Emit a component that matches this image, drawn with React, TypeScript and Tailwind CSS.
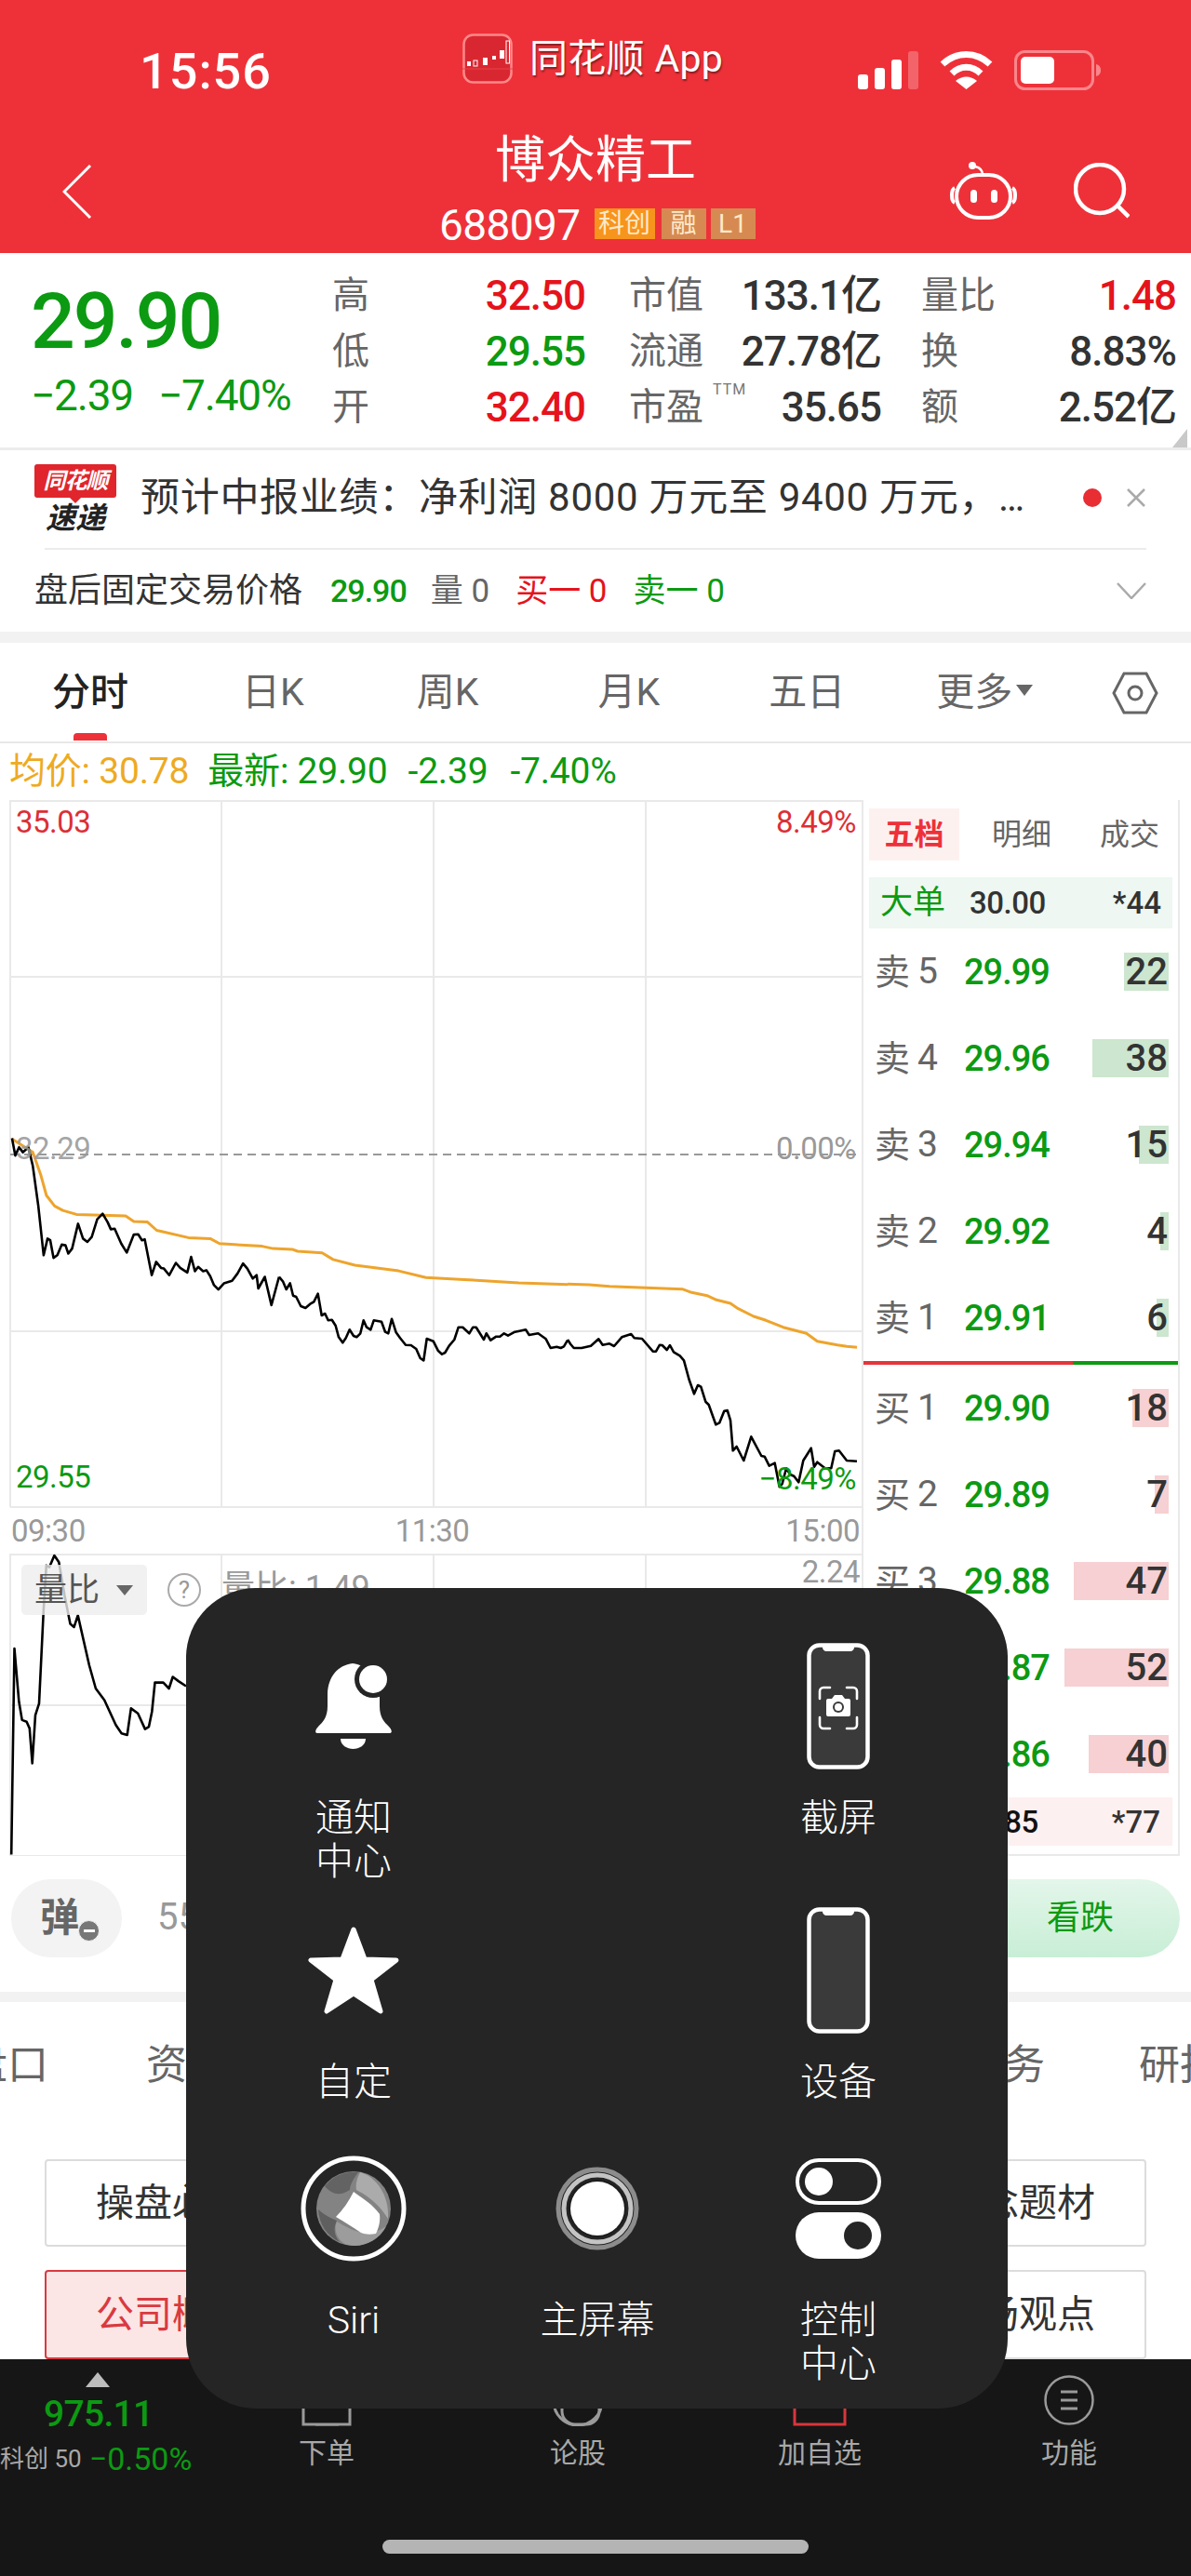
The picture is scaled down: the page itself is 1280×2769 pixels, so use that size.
import React from "react";

const GREEN = "text-[#0c9a12]";

const map = (a: number[], sx: number, ox: number, sy: number, oy: number) => {
  const out: string[] = [];
  for (let i = 0; i < a.length; i += 2) out.push(`${(a[i] / sx + ox).toFixed(1)},${(a[i + 1] / sy + oy).toFixed(1)}`);
  return out.join(" ");
};

const black1 = map([22,1018,28,1070,35,1045,42,1060,52,1045,60,1100,70,1220,80,1370,87,1320,92,1325,98,1378,105,1370,113,1338,120,1340,125,1365,132,1350,143,1275,152,1320,160,1330,168,1315,178,1262,188,1245,197,1270,203,1292,210,1290,222,1335,232,1362,245,1308,253,1307,260,1325,265,1322,278,1430,286,1390,295,1408,300,1410,310,1430,322,1393,330,1408,343,1422,350,1375,357,1418,363,1405,372,1418,378,1415,385,1433,392,1460,400,1473,410,1455,425,1447,435,1425,445,1395,453,1410,463,1440,470,1430,473,1470,485,1435,497,1520,511,1435], 1.704, 0, 2.8, 860);
const black2 = map([0,218,12,232,23,258,35,238,45,278,55,282,70,312,85,318,100,305,112,298,125,272,137,342,148,336,158,358,170,356,182,375,192,412,205,430,215,415,227,388,240,408,250,412,262,400,272,358,282,380,295,388,305,358,330,362,342,395,352,400,363,353,377,397,390,415,408,437,425,438,442,450,455,480,466,487,476,417,497,425,512,455,525,467,535,462,548,440,565,420,578,380,592,380,613,400,625,380,635,380,660,420,668,400,682,422,700,410,712,410,725,400,738,407,760,395,775,392,795,388,806,405,835,400,860,418,875,447,895,443,908,447,918,442,930,422], 3, 300, 3, 1300);
const black3 = map([0,420,10,435,20,447,45,447,75,440,100,418,113,437,135,433,150,441,175,412,205,402,215,415,240,417,275,458,285,458,297,437,305,438,320,453,330,438,342,460,362,472,375,487,392,550,408,595,420,567,430,572,445,620,455,630,478,694,490,688,505,650,515,648,525,680,533,778,545,765,568,810,592,733,625,795,635,797,650,827,668,818,683,895,692,885,705,835,718,855,730,860,745,880,760,810,785,770,795,830,805,815,830,835,850,835,862,780,875,778,900,810,933,812], 3, 610, 3, 1300);
const orange1 = map([22,1020,60,1060,75,1130,85,1190,100,1222,115,1235,140,1247,230,1252,245,1268,270,1270,287,1295,345,1317,385,1320,402,1335,480,1343,500,1350,535,1352,545,1358,590,1363,610,1383,650,1400,730,1417,780,1437,850,1443,950,1453,1040,1458], 1.704, 0, 2.8, 860);
const orange2 = map([0,241,70,243,135,248,370,257,400,268,450,278,480,292,525,303,550,320,600,345,640,358,695,380,770,400,805,425,870,437,900,442,933,445], 3, 610, 3, 1300);
const vol = map([30,990,38,370,50,530,58,585,70,590,78,610,85,715,93,570,103,535,115,250,122,120,130,125,143,90,155,110,170,210,185,295,195,305,205,270,235,420,252,490,275,525,305,600,320,625,335,630,345,550,363,565,382,612,392,605,400,560,408,472,430,472,445,490,455,455,470,468,490,483], 2.45, 0, 2.8, 1640);

function ChartLines() {
  return (
    <svg className="absolute left-0 top-0" width="926" height="1135" viewBox="0 860 926 1135" fill="none">
      <g stroke="#e9e9e9" strokeWidth="2">
        <path d="M11 861H926M11 1050H926M11 1431H926M11 1620H926M11 860V1620M238 860V1620M466 860V1620M694 860V1620" />
        <path d="M11 1671H926M11 1833H926M11 1995H926M11 1670V1995M238 1670V1995M466 1670V1995M694 1670V1995" />
      </g>
      <path d="M11 1241H926" stroke="#999" strokeWidth="2" strokeDasharray="9 6" />
      <polyline points={orange1} stroke="#eea42c" strokeWidth="3" strokeLinejoin="round" />
      <polyline points={orange2} stroke="#eea42c" strokeWidth="3" strokeLinejoin="round" />
      <polyline points={black1} stroke="#000" strokeWidth="2.6" strokeLinejoin="round" />
      <polyline points={black2} stroke="#000" strokeWidth="2.6" strokeLinejoin="round" />
      <polyline points={black3} stroke="#000" strokeWidth="2.6" strokeLinejoin="round" />
      <polyline points={vol} stroke="#000" strokeWidth="2.6" strokeLinejoin="round" />
    </svg>
  );
}

function Row({ label, n, price, v, w, buy }: { label: string; n: number; price: string; v: number; w: number; buy?: boolean }) {
  return (
    <div className="relative flex h-[93px] items-center pl-[12px]">
      <span className="w-[46px] text-[38px] leading-none text-[#666]">{label}</span>
      <span className="w-[50px] text-[39px] leading-none text-[#666]">{n}</span>
      <span className={`text-[38px] font-medium leading-none tracking-[-1px] ${GREEN}`}>{price}</span>
      <div
        className={`absolute right-[10px] top-[26px] h-[41px] ${buy ? "bg-[#f6d0d2]" : "bg-[#cde6cf]"}`}
        style={{ width: w }}
      />
      <span className="absolute right-[11px] text-[40px] font-medium leading-none text-[#333]">{v}</span>
    </div>
  );
}

function Stat({ label, value, cls, sup }: { label: string; value: string; cls: string; sup?: boolean }) {
  return (
    <div className="relative flex h-[60px] w-full items-center justify-between">
      <span className="text-[40px] leading-none text-[#666]">{label}</span>
      {sup && <span className="absolute left-[90px] top-[3px] text-[16px] leading-none tracking-[1px] text-[#777]">TTM</span>}
      <span className={`text-[44px] font-medium leading-none tracking-[-1px] ${cls}`}>{value}</span>
    </div>
  );
}

function Phone({ camera }: { camera?: boolean }) {
  return (
    <svg width="68" height="136" viewBox="0 0 68 136" fill="none">
      <rect x="2.500" y="2.500" width="63" height="131" rx="11" fill="#3a3a3a" stroke="#fff" strokeWidth="4.500" />
      <path d="M17 2H51V5C51 7 49 9 47 9H21C19 9 17 7 17 5Z" fill="#fff" />
      {camera && (
        <g>
          <path
            d="M14 60V52a4 4 0 0 1 4-4h7M43 48h7a4 4 0 0 1 4 4v8M54 80v8a4 4 0 0 1-4 4h-7M25 92h-7a4 4 0 0 1-4-4v-8"
            stroke="#fff"
            strokeWidth="2.600"
            strokeLinecap="round"
          />
          <path d="M21 62a2 2 0 0 1 2-2h4l3-4h8l3 4h4a2 2 0 0 1 2 2v15a2 2 0 0 1-2 2H23a2 2 0 0 1-2-2z" fill="#fff" />
          <circle cx="34" cy="69" r="6" fill="#3a3a3a" />
          <circle cx="34" cy="69" r="4" fill="#fff" />
        </g>
      )}
    </svg>
  );
}

function Cell({ children, label }: { children: React.ReactNode; label: React.ReactNode }) {
  return (
    <div className="flex flex-col items-center">
      <div className="flex h-[136px] items-center justify-center">{children}</div>
      <div className="mt-[29px] text-center text-[41px] font-light leading-[47px] text-white">{label}</div>
    </div>
  );
}

function Assistive() {
  return (
    <div className="absolute left-[200px] top-[1707px] grid h-[882px] w-[883px] grid-cols-[262px_262px_256px] grid-rows-[284px_256px_auto] rounded-[75px] bg-[#252525] pl-[49px] pt-[59px]">
      <Cell label={<>通知<br />中心</>}>
        <svg width="84" height="92" viewBox="0 0 84 92" fill="#fff">
          <path d="M41 0C25 2 15 14 14 32V46C14 58 9 63 4 68C1 71 0 75 3 75H81C84 75 83 71 80 68C75 63 70 58 70 46V32C69 14 57 2 41 0Z" />
          <path d="M28 81H55C55 88 48 92 41.500 92C35 92 28 88 28 81Z" />
          <circle cx="63" cy="17" r="20" fill="#252525" />
          <circle cx="63" cy="17" r="15" />
        </svg>
      </Cell>
      <div />
      <Cell label="截屏"><Phone camera /></Cell>
      <Cell label="自定">
        <svg width="98" height="94" viewBox="0 0 98 94" fill="#fff" stroke="#fff" strokeWidth="5" strokeLinejoin="round">
          <path d="M49 3L61 35L95 36L68 57L78 91L49 72L20 91L30 57L3 36L37 35Z" />
        </svg>
      </Cell>
      <div />
      <Cell label="设备"><Phone /></Cell>
      <Cell label="Siri">
        <svg width="114" height="114" viewBox="0 0 114 114">
          <circle cx="57" cy="57" r="54" fill="#252525" stroke="#fff" strokeWidth="5" />
          <circle cx="57" cy="57" r="40" fill="#838383" />
          <path d="M26 33C36 21 48 17 62 18C56 26 53 32 53 37C42 44 34 42 26 33Z" fill="#636363" />
          <path d="M64 18C80 22 96 42 94 68C88 58 78 46 60 37C59 30 61 24 64 18Z" fill="#ababab" />
          <path d="M19 58C28 66 35 68 39 70C35 78 36 86 42 93C28 86 20 74 19 58Z" fill="#5f5f5f" />
          <path d="M39 71C54 80 72 90 92 76C84 92 66 100 50 96C40 92 35 80 39 71Z" fill="#9c9c9c" />
          <path d="M57 39C68 47 78 53 85 63C86 71 84 78 81 84C75 85 70 85 65 83C56 77 47 71 38 66C46 58 52 49 57 39Z" fill="#fff" />
        </svg>
      </Cell>
      <Cell label="主屏幕">
        <svg width="90" height="90" viewBox="0 0 90 90" fill="none">
          <circle cx="45" cy="45" r="42" stroke="#8c8c8c" strokeWidth="5" />
          <circle cx="45" cy="45" r="36" stroke="#c4c4c4" strokeWidth="5" />
          <circle cx="45" cy="45" r="31" fill="#1e1e1e" />
          <circle cx="45" cy="45" r="29" fill="#fff" />
        </svg>
      </Cell>
      <Cell label={<>控制<br />中心</>}>
        <svg width="92" height="108" viewBox="0 0 92 108">
          <rect x="2" y="2" width="88" height="46" rx="23" fill="none" stroke="#fff" strokeWidth="4" />
          <ellipse cx="25" cy="25" rx="15" ry="15" fill="#fff" />
          <rect x="0" y="58" width="92" height="50" rx="25" fill="#fff" />
          <circle cx="67" cy="83" r="15" fill="#252525" />
        </svg>
      </Cell>
    </div>
  );
}

export default function App() {
  return (
    <div className="relative h-[2769px] w-[1280px] overflow-hidden bg-white font-['Roboto','Noto_Sans_CJK_SC',sans-serif]">
      {/* Red header */}
      <header className="relative h-[272px] bg-[#ee3139] text-white">
        <div className="flex h-[130px] items-start">
          <span className="ml-[150px] mt-[50px] text-[54px] font-medium leading-[54px] tracking-[1px]">15:56</span>
          <div className="ml-[205px] mt-[36px] flex items-center">
            <svg width="54" height="54" viewBox="0 0 54 54">
              <rect x="1.500" y="1.500" width="51" height="51" rx="10" fill="#d92731" stroke="#f88" strokeWidth="2.500" />
              <path d="M0 38H54" stroke="#e9434b" strokeWidth="1" />
              <g fill="#fff">
                <rect x="5" y="30" width="4" height="5" />
                <rect x="12" y="29" width="4" height="6" fill="none" stroke="#fff" strokeWidth="1" />
                <rect x="22" y="26" width="5" height="8" />
                <rect x="32" y="24" width="4" height="4" />
                <rect x="40" y="18" width="5" height="9" />
                <rect x="47" y="8" width="3.500" height="24" fill="none" stroke="#fff" strokeWidth="1" />
              </g>
            </svg>
            <span className="ml-[18px] text-[41px] leading-none tracking-[0.3px] [text-shadow:1px_2px_2px_rgba(0,0,0,0.45)]">同花顺 App</span>
          </div>
          <svg className="ml-[145px] mt-[55px]" width="65" height="41" viewBox="0 0 65 41" fill="#fff">
            <rect x="0" y="25" width="11" height="16" rx="3" />
            <rect x="18" y="18" width="11" height="23" rx="3" />
            <rect x="36" y="9" width="11" height="32" rx="3" />
            <rect x="54" y="0" width="11" height="41" rx="3" opacity="0.25" />
          </svg>
          <svg className="ml-[23px] mt-[55px]" width="57" height="41" viewBox="0 0 57 41" fill="none" stroke="#fff">
            <path d="M3 14C18 0 39 0 54 14" strokeWidth="7" />
            <path d="M13 24C22 15 35 15 44 24" strokeWidth="7" />
            <path d="M28.500 41L17 32C24 26 33 26 40 32Z" fill="#fff" stroke="none" />
          </svg>
          <svg className="ml-[23px] mt-[54px]" width="94" height="43" viewBox="0 0 94 43" fill="none">
            <rect x="1.500" y="1.500" width="83" height="40" rx="10" stroke="#f9868b" strokeWidth="3" />
            <rect x="7" y="7" width="36" height="29" rx="5" fill="#fff" />
            <path d="M88 15C92 16 93 19 93 21.500C93 24 92 27 88 28Z" fill="#f9868b" />
          </svg>
        </div>
        <div className="relative h-[142px]">
          <svg className="absolute left-[67px] top-[47px]" width="32" height="58" viewBox="0 0 32 58" fill="none" stroke="#fff" strokeWidth="3">
            <path d="M30 1L2 29L30 57" />
          </svg>
          <div className="flex h-[86px] items-start justify-center pt-[16px]">
            <span className="text-[54px] leading-none">博众精工</span>
          </div>
          <div className="ml-[472px] flex h-[56px] items-start pt-[8px]">
            <span className="text-[46px] leading-[36px] tracking-[-0.6px]">688097</span>
            <span className="ml-[15px] flex h-[33px] w-[65px] items-center justify-center bg-[#f7941d] text-[28px] leading-none text-[#ffe9c9]">科创</span>
            <span className="ml-[7px] flex h-[33px] w-[48px] items-center justify-center bg-[#d68a52] text-[28px] leading-none text-[#ffe9c9]">融</span>
            <span className="ml-[5px] flex h-[33px] w-[48px] items-center justify-center bg-[#d68a52] text-[28px] leading-none text-[#ffe9c9]">L1</span>
          </div>
          <svg className="absolute left-[1021px] top-[43px]" width="72" height="64" viewBox="0 0 72 64" fill="none" stroke="#fff" strokeWidth="4">
            <circle cx="24" cy="5" r="4" fill="#fff" stroke="none" />
            <path d="M27 6C32 7 35 10 35 15" strokeWidth="2.500" />
            <rect x="7" y="15" width="58" height="46" rx="23" />
            <path d="M5 29C1 31 1 43 5 45M67 29C71 31 71 43 67 45" strokeWidth="4" />
            <rect x="22" y="31" width="7" height="14" rx="3.500" fill="#fff" stroke="none" />
            <rect x="44" y="31" width="7" height="14" rx="3.500" fill="#fff" stroke="none" />
          </svg>
          <svg className="absolute left-[1154px] top-[45px]" width="60" height="60" viewBox="0 0 60 60" fill="none" stroke="#fff" strokeWidth="4.500">
            <circle cx="28" cy="28" r="26" />
            <path d="M47 46L59 58" />
          </svg>
        </div>
      </header>

      {/* Quote */}
      <section className="relative flex h-[212px] border-b-[3px] border-[#ececec] pt-[16px]">
        <div className="ml-[33px] w-[324px]">
          <div className={`mt-[14px] h-[88px] text-[84px] font-medium leading-[88px] tracking-[-2px] ${GREEN}`}>29.90</div>
          <div className={`mt-[10px] flex text-[46px] leading-[50px] tracking-[-1.2px] ${GREEN}`}>
            <span className="w-[137px]">−2.39</span>
            <span>−7.40%</span>
          </div>
        </div>
        <div className="flex w-[272px] flex-col">
          <Stat label="高" value="32.50" cls="text-[#e5131c]" />
          <Stat label="低" value="29.55" cls={GREEN} />
          <Stat label="开" value="32.40" cls="text-[#e5131c]" />
        </div>
        <div className="ml-[47px] flex w-[271px] flex-col">
          <Stat label="市值" value="133.1亿" cls="text-[#333]" />
          <Stat label="流通" value="27.78亿" cls="text-[#333]" />
          <Stat label="市盈" value="35.65" cls="text-[#333]" sup />
        </div>
        <div className="ml-[43px] flex w-[274px] flex-col">
          <Stat label="量比" value="1.48" cls="text-[#e5131c]" />
          <Stat label="换" value="8.83%" cls="text-[#333]" />
          <Stat label="额" value="2.52亿" cls="text-[#333]" />
        </div>
        <svg className="absolute bottom-0 right-[4px]" width="16" height="20" viewBox="0 0 16 20"><path d="M16 0V20H0Z" fill="#c9c9c9" /></svg>
      </section>

      {/* News */}
      <section className="flex h-[105px] items-center pl-[37px]">
        <div className="mt-[-1px] flex w-[88px] flex-col items-center">
          <div className="relative flex h-[36px] w-[88px] items-center justify-center rounded-[3px] bg-[#e0252c] text-[24px] font-bold italic leading-none tracking-[-1px] text-white">
            同花顺
            <span className="absolute bottom-[-6px] left-[38px] h-0 w-0 border-x-[6px] border-t-[6px] border-x-transparent border-t-[#e0252c]" />
          </div>
          <div className="mt-[6px] text-[32px] font-bold italic leading-[32px] text-[#222]">速递</div>
        </div>
        <span className="ml-[26px] mt-[-3px] text-[42px] leading-none tracking-[0.7px] text-[#333]">预计中报业绩：净利润 8000 万元至 9400 万元，…</span>
        <span className="absolute left-[1164px] top-[525px] h-[20px] w-[20px] rounded-full bg-[#e82d33]" />
        <svg className="absolute left-[1210px] top-[524px]" width="22" height="22" viewBox="0 0 22 22" stroke="#aaa" strokeWidth="2.500"><path d="M2 2L20 20M20 2L2 20" /></svg>
      </section>
      <div className="mx-[48px] h-[2px] bg-[#ececec]" />
      <section className="flex h-[88px] items-center pl-[37px]">
        <span className="text-[36px] leading-none text-[#333]">盘后固定交易价格</span>
        <span className={`ml-[30px] text-[34px] font-medium leading-none tracking-[-1px] ${GREEN}`}>29.90</span>
        <span className="ml-[26px] text-[35px] leading-none text-[#666]">量 0</span>
        <span className="ml-[28px] text-[35px] leading-none text-[#e5131c]">买一 0</span>
        <span className={`ml-[28px] text-[35px] leading-none ${GREEN}`}>卖一 0</span>
        <svg className="ml-auto mr-[48px]" width="32" height="18" viewBox="0 0 32 18" fill="none" stroke="#aaa" strokeWidth="2.500"><path d="M1 1L16 17L31 1" /></svg>
      </section>
      <div className="h-[12px] bg-[#f2f2f2]" />

      {/* Tabs */}
      <nav className="relative flex h-[108px] items-center border-b-[2px] border-[#e8e8e8] text-[41px] leading-none text-[#666]">
        <span className="ml-[56px] font-medium text-[#222]">分时</span>
        <span className="ml-[122px]">日K</span>
        <span className="ml-[121px]">周K</span>
        <span className="ml-[128px]">月K</span>
        <span className="ml-[117px]">五日</span>
        <span className="ml-[98px] flex items-center">更多<span className="ml-[4px] mt-[-4px] h-0 w-0 border-x-[9px] border-t-[12px] border-x-transparent border-t-[#666]" /></span>
        <svg className="absolute left-[1195px] top-[31px]" width="50" height="46" viewBox="0 0 50 46" fill="none" stroke="#666" strokeWidth="3"><path d="M13 2H37L48 23L37 44H13L2 23Z" /><circle cx="25" cy="23" r="7" /></svg>
        <span className="absolute bottom-[1px] left-[79px] h-[8px] w-[36px] rounded-t-[4px] bg-[#ee3139]" />
      </nav>

      {/* Price legend */}
      <div className="flex h-[61px] items-center pl-[10px] text-[39px] leading-none tracking-[-0.2px]">
        <span className="text-[#eeaa22]">均价: 30.78</span>
        <span className={`ml-[20px] ${GREEN}`}>最新: 29.90</span>
        <span className={`ml-[22px] ${GREEN}`}>-2.39</span>
        <span className={`ml-[24px] ${GREEN}`}>-7.40%</span>
      </div>

      {/* Chart + order book */}
      <section className="flex h-[1135px]">
        <div className="relative flex w-[926px] flex-col">
          <ChartLines />
          <div className="relative h-[760px] text-[33px] leading-none tracking-[-0.5px]">
            <span className="absolute left-[17px] top-[7px] text-[#dc2f36]">35.03</span>
            <span className="absolute right-[6px] top-[7px] text-[#dc2f36]">8.49%</span>
            <span className="absolute left-[17px] top-[358px] text-[#999]/90">32.29</span>
            <span className="absolute right-[6px] top-[358px] text-[#999]">0.00%</span>
            <span className={`absolute left-[17px] top-[711px] ${GREEN}`}>29.55</span>
            <span className={`absolute right-[6px] top-[713px] ${GREEN}`}>−8.49%</span>
          </div>
          <div className="relative flex h-[50px] items-center justify-between pl-[12px] pr-[2px] text-[33px] leading-none tracking-[-0.5px] text-[#999]">
            <span>09:30</span>
            <span className="ml-[-7px]">11:30</span>
            <span>15:00</span>
          </div>
          <div className="relative h-[325px]">
            <div className="absolute left-[23px] top-[12px] flex h-[54px] w-[135px] items-center rounded-[5px] bg-[#eeeeeecc] pl-[14px] text-[35px] leading-none text-[#555]">
              量比
              <span className="ml-[18px] h-0 w-0 border-x-[9px] border-t-[11px] border-x-transparent border-t-[#666]" />
            </div>
            <span className="absolute left-[180px] top-[21px] flex h-[36px] w-[36px] items-center justify-center rounded-full border-[2px] border-[#aaa] text-[26px] leading-none text-[#999]">?</span>
            <span className="absolute left-[238px] top-[19px] text-[36px] leading-none text-[#999]">量比: 1.49</span>
            <span className="absolute right-[2px] top-[3px] text-[33px] leading-none tracking-[-0.5px] text-[#999]">2.24</span>
          </div>
        </div>
        <div className="relative w-[342px] border-x-[2px] border-b-[2px] border-[#e9e9e9]">
          <div className="flex h-[83px] items-start pt-[9px] text-[32px] leading-none text-[#666]">
            <span className="ml-[6px] flex h-[56px] w-[97px] items-center justify-center bg-[#fdf1f0] font-bold text-[#ee3139]">五档</span>
            <span className="ml-[35px] flex h-[56px] items-center">明细</span>
            <span className="ml-[52px] flex h-[56px] items-center">成交</span>
          </div>
          <div className="mx-[6px] flex h-[55px] items-center bg-[#eef7f1] text-[35px] leading-none">
            <span className={`ml-[12px] ${GREEN}`}>大单</span>
            <span className="ml-[26px] text-[33px] font-medium tracking-[-0.5px] text-[#333]">30.00</span>
            <span className="ml-auto mr-[12px] text-[33px] font-medium text-[#333]">*44</span>
          </div>
          <Row label="卖" n={5} price="29.99" v={22} w={48} />
          <Row label="卖" n={4} price="29.96" v={38} w={82} />
          <Row label="卖" n={3} price="29.94" v={15} w={32} />
          <Row label="卖" n={2} price="29.92" v={4} w={9} />
          <Row label="卖" n={1} price="29.91" v={6} w={13} />
          <div className="flex h-[4px]">
            <div className="w-[225px] bg-[#e5343a]" />
            <div className="flex-1 bg-[#0c9a12]" />
          </div>
          <Row label="买" n={1} price="29.90" v={18} w={39} buy />
          <Row label="买" n={2} price="29.89" v={7} w={15} buy />
          <Row label="买" n={3} price="29.88" v={47} w={102} buy />
          <Row label="买" n={4} price="29.87" v={52} w={112} buy />
          <Row label="买" n={5} price="29.86" v={40} w={86} buy />
          <div className="mx-[6px] flex h-[52px] items-center bg-[#fdf0f0] text-[33px] leading-none text-[#333]">
            <span className="ml-[12px] text-[35px] text-[#2a9a2a]">大单</span>
            <span className="ml-[18px] font-medium tracking-[-0.5px] text-[#111]">29.85</span>
            <span className="ml-auto mr-[13px] font-medium">*77</span>
          </div>
        </div>
      </section>

      {/* Sentiment */}
      <div className="flex h-[146px] items-start pt-[25px]">
        <div className="relative ml-[12px] flex h-[84px] w-[119px] items-center rounded-[42px] bg-[#f3f3f3] pl-[31px] text-[42px] font-bold leading-none text-[#666]">
          弹
          <span className="absolute left-[72px] top-[44px] flex h-[23px] w-[23px] items-center justify-center rounded-full border-[1px] border-[#f3f3f3] bg-[#777]">
            <span className="h-[3px] w-[12px] bg-white" />
          </span>
        </div>
        <span className="ml-[38px] mt-[21px] text-[40px] leading-none text-[#999]">55%</span>
        <div className="ml-auto mr-[12px] flex h-[84px] w-[300px] items-center justify-center rounded-r-[42px] bg-gradient-to-b from-[#e3f6ea] to-[#c8eed6] pl-[86px] text-[36px] leading-none text-[#0c9a12]">看跌</div>
      </div>
      <div className="h-[11px] bg-[#f2f2f2]" />

      {/* Section tabs */}
      <div className="flex h-[136px] items-center overflow-hidden text-[44px] leading-none text-[#666]">
        <span className="ml-[-36px] shrink-0">盘口</span>
        <span className="ml-[105px] shrink-0">资金</span>
        <span className="ml-[790px] shrink-0">财务</span>
        <span className="ml-[101px] shrink-0">研报</span>
      </div>

      {/* Topic buttons */}
      <div className="flex flex-col gap-[25px] px-[48px] pt-[33px]">
        <div className="flex justify-between text-[41px] leading-none text-[#333]">
          <span className="flex h-[94px] w-[274px] items-center justify-center rounded-[4px] border-[2px] border-[#dcdcdc]">操盘必读</span>
          <span className="flex h-[94px] w-[274px] items-center justify-center rounded-[4px] border-[2px] border-[#dcdcdc]">概念题材</span>
        </div>
        <div className="flex justify-between text-[41px] leading-none text-[#333]">
          <span className="flex h-[96px] w-[274px] items-center justify-center rounded-[4px] border-[2px] border-[#d93a40] bg-[#fbe5e5] text-[#d93a40]">公司概况</span>
          <span className="flex h-[96px] w-[274px] items-center justify-center rounded-[4px] border-[2px] border-[#dcdcdc]">市场观点</span>
        </div>
      </div>

      {/* Bottom bar */}
      <footer className="absolute left-0 top-[2536px] flex h-[233px] w-[1280px] flex-col bg-[#161616]">
        <div className="grid h-[194px] grid-cols-[216px_270px_270px_250px_274px]">
          <div className="relative">
            <span className="absolute left-[92px] top-[14px] h-0 w-0 border-x-[13px] border-b-[16px] border-x-transparent border-b-[#bdbdbd]" />
            <span className={`absolute left-[47px] top-[37px] text-[39px] font-medium leading-[44px] tracking-[-0.7px] ${GREEN}`}>975.11</span>
            <div className="absolute left-0 top-[90px] flex w-[216px] items-center whitespace-nowrap">
              <span className="text-[26px] leading-none text-[#a8a8a8]">科创 50</span>
              <span className={`ml-[8px] text-[34px] leading-none ${GREEN}`}>−0.50%</span>
            </div>
          </div>
          <div className="flex flex-col items-center">
            <svg className="mt-[18px]" width="54" height="54" viewBox="0 0 54 54" fill="none" stroke="#9a9a9a" strokeWidth="3">
              <rect x="2" y="2" width="50" height="50" />
              <path d="M15 55H40" />
            </svg>
            <span className="mt-[14px] text-[30px] leading-none text-[#a8a8a8]">下单</span>
          </div>
          <div className="flex flex-col items-center">
            <svg className="mt-[18px]" width="58" height="54" viewBox="0 0 58 54" fill="none" stroke="#9a9a9a" strokeWidth="3">
              <circle cx="29" cy="27" r="26" />
              <rect x="12" y="14" width="40" height="38" rx="14" />
            </svg>
            <span className="mt-[14px] text-[30px] leading-none text-[#a8a8a8]">论股</span>
          </div>
          <div className="flex flex-col items-center">
            <svg className="mt-[18px]" width="58" height="54" viewBox="0 0 58 54" fill="none" stroke="#d8363c" strokeWidth="3">
              <rect x="2" y="2" width="54" height="50" />
            </svg>
            <span className="mt-[14px] text-[30px] leading-none text-[#a8a8a8]">加自选</span>
          </div>
          <div className="flex flex-col items-center pl-[12px]">
            <svg className="mt-[17px]" width="54" height="54" viewBox="0 0 54 54" fill="none" stroke="#9a9a9a" strokeWidth="2.500">
              <circle cx="27" cy="27" r="25.500" />
              <path d="M18 18H36M18 27H36M18 36H36" strokeWidth="3" />
            </svg>
            <span className="mt-[15px] text-[30px] leading-none text-[#a8a8a8]">功能</span>
          </div>
        </div>
        <div className="ml-[411px] h-[15px] w-[458px] rounded-full bg-[#b4b4b4]" />
      </footer>

      <Assistive />
    </div>
  );
}
